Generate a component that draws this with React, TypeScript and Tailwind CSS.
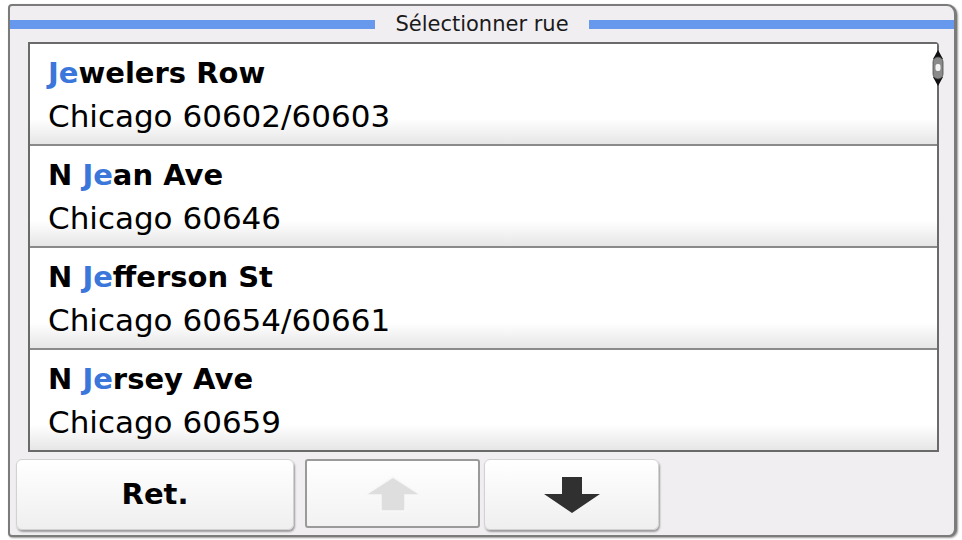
import React from 'react';

type Street = { pre: string; hit: string; rest: string; city: string };

const streets: Street[] = [
  { pre: '', hit: 'Je', rest: 'welers Row', city: 'Chicago 60602/60603' },
  { pre: 'N ', hit: 'Je', rest: 'an Ave', city: 'Chicago 60646' },
  { pre: 'N ', hit: 'Je', rest: 'fferson St', city: 'Chicago 60654/60661' },
  { pre: 'N ', hit: 'Je', rest: 'rsey Ave', city: 'Chicago 60659' },
];

const font = { fontFamily: '"DejaVu Sans", Verdana, sans-serif' };

const ScrollThumb = () => (
  <svg width="12" height="36" viewBox="0 0 12 36">
    <polygon points="6,0 11,9 1,9" fill="#111" />
    <polygon points="6,36 11,27 1,27" fill="#111" />
    <rect x="1" y="7" width="10" height="22" rx="5" fill="#8a8a8a" stroke="#4a4a4a" strokeWidth="0.8" />
    <rect x="3.5" y="14" width="5" height="7" rx="2" fill="#f4f4f4" />
  </svg>
);

const UpArrow = () => (
  <svg width="58" height="36" viewBox="0 0 58 36">
    <polygon points="1,19 29,1 57,19 41,19 41,35 17,35 17,19" fill="#dedede" stroke="#f7f7f7" strokeWidth="1.5" />
  </svg>
);

const DownArrow = () => (
  <svg width="58" height="36" viewBox="0 0 58 36">
    <polygon points="19,0 39,0 39,17 57,17 29,36 1,17 19,17" fill="#303030" />
  </svg>
);

const Row = ({ s, last }: { s: Street; last: boolean }) => (
  <div
    className={`flex-1 flex flex-col pl-[18px] pt-[12px] bg-linear-to-b from-white from-75% to-[#e6e6e6] ${
      last ? '' : 'border-b-2 border-[#8a8a8a]'
    }`}
  >
    <div className="text-[29px] leading-[34px] font-bold text-black whitespace-nowrap">
      {s.pre}
      <span className="text-[#3b76db]">{s.hit}</span>
      {s.rest}
    </div>
    <div className="text-[31px] leading-[52px] text-black whitespace-nowrap">{s.city}</div>
  </div>
);

const App = () => {
  return (
    <div className="w-[962px] h-[540px] bg-white pt-[4px] pl-[8px] pr-[5px] pb-[3px]" style={font}>
      <div className="w-full h-full flex flex-col border-2 border-r-[3px] border-[#7b7b7b] rounded-tl-[4px] rounded-tr-[10px] rounded-br-[8px] rounded-bl-[4px] bg-[#f1eef1] shadow-[1px_1px_2px_rgba(0,0,0,0.4)] overflow-hidden">
        <div className="h-[36px] flex items-center shrink-0">
          <div className="flex-1 h-[9px] bg-[#6699ee]" />
          <div className="px-[20px] text-[21px] leading-[24px] text-[#1a1a1a]">Sélectionner rue</div>
          <div className="flex-1 h-[9px] bg-[#6699ee]" />
        </div>

        <div className="relative ml-[18px] mr-[15px] h-[410px] shrink-0 flex flex-col border-2 border-[#6a6a6a] rounded-tr-[4px] bg-white shadow-[inset_2px_2px_3px_rgba(0,0,0,0.25)]">
          {streets.map((s, i) => (
            <Row key={i} s={s} last={i === streets.length - 1} />
          ))}
          <div className="absolute right-[-7px] top-[6px]">
            <ScrollThumb />
          </div>
        </div>

        <div className="mt-[7px] h-[71px] ml-[6px] flex shrink-0">
          <button
            type="button"
            className="w-[278px] h-full rounded-[6px] border border-[#d2d2d2] bg-linear-to-b from-white to-[#efefef] shadow-[1px_2px_2px_rgba(0,0,0,0.35)] text-[29px] font-bold text-black flex items-center justify-center"
          >
            Ret.
          </button>
          <button
            type="button"
            className="ml-[11px] w-[175px] h-[69px] rounded-[3px] border-2 border-[#9a9a9a] bg-linear-to-b from-white to-[#f2f2f2] flex items-center justify-center"
          >
            <UpArrow />
          </button>
          <button
            type="button"
            className="ml-[4px] w-[175px] h-full rounded-[6px] border border-[#d2d2d2] bg-linear-to-b from-white to-[#efefef] shadow-[1px_2px_2px_rgba(0,0,0,0.35)] flex items-center justify-center"
          >
            <DownArrow />
          </button>
        </div>
      </div>
    </div>
  );
};

export default App;
